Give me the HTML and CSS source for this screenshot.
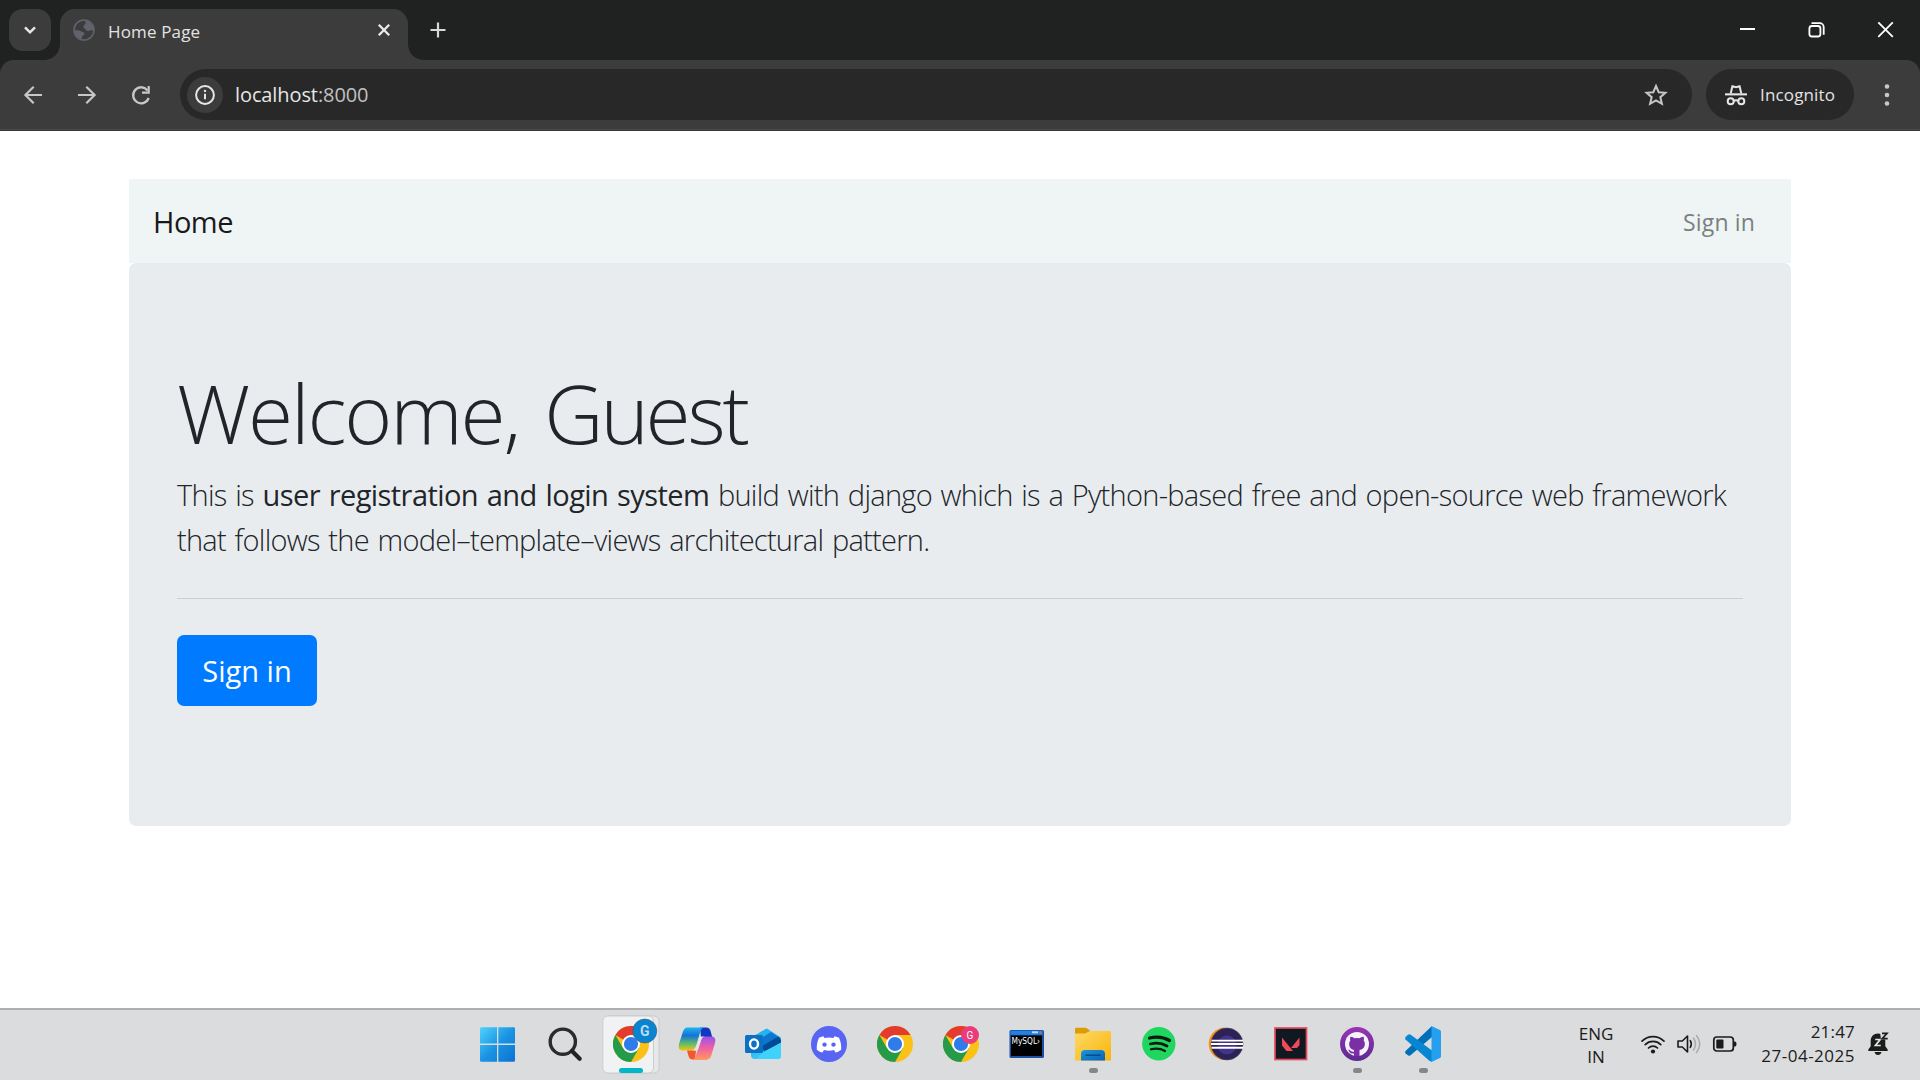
FILE: index.html
```html
<!DOCTYPE html>
<html lang="en">
<head>
<meta charset="utf-8">
<title>Home Page</title>
<link rel="stylesheet" href="styles.css">
</head>
<body>
<svg class="defs" aria-hidden="true">
  <defs>
    <linearGradient id="win" x1="0" y1="0" x2="1" y2="1"><stop offset="0" stop-color="#4fd3fb"/><stop offset=".5" stop-color="#1b94e4"/><stop offset="1" stop-color="#0a72d0"/></linearGradient>
    <linearGradient id="copA" x1="0" y1="0" x2="0" y2="1"><stop offset="0" stop-color="#1fb4ee"/><stop offset=".35" stop-color="#1473d8"/><stop offset=".7" stop-color="#5fbb6a"/><stop offset="1" stop-color="#f3c60e"/></linearGradient>
    <linearGradient id="copB" x1="0" y1="0" x2="0" y2="1"><stop offset="0" stop-color="#9a52ec"/><stop offset=".5" stop-color="#f0609f"/><stop offset="1" stop-color="#ff9a5c"/></linearGradient>
    <linearGradient id="outA" x1="0" y1="0" x2="1" y2="1"><stop offset="0" stop-color="#1ba7e6"/><stop offset="1" stop-color="#4adcff"/></linearGradient>
    <linearGradient id="fold" x1="0" y1="0" x2="1" y2="1"><stop offset="0" stop-color="#ffd965"/><stop offset="1" stop-color="#f7b50c"/></linearGradient>
    <linearGradient id="foldB" x1="0" y1="0" x2="1" y2="1"><stop offset="0" stop-color="#1b95dc"/><stop offset="1" stop-color="#0a62b2"/></linearGradient>
    <linearGradient id="gh" x1="0" y1="0" x2="0" y2="1"><stop offset="0" stop-color="#9a34b5"/><stop offset="1" stop-color="#5b2a91"/></linearGradient>
    <symbol id="chrome" viewBox="0 0 36 36">
      <circle cx="18" cy="18" r="18" fill="#fbc116"/>
      <path d="M18 18 2.4 9A18 18 0 0 1 33.6 9H18z" fill="#e33b2e"/>
      <path d="M2.4 9A18 18 0 0 0 18 36L25.8 22.5 18 18 10.2 22.5z" fill="#259a48"/>
      <circle cx="18" cy="18" r="9" fill="#fff"/><circle cx="18" cy="18" r="7.1" fill="#2f7bea"/>
    </symbol>
  </defs>
</svg>

<header class="tabstrip">
  <button class="tabsearch" aria-label="Search tabs"><svg width="42" height="42"><path d="M16 18.3l5 5 5-5" fill="none" stroke="#e8e8e8" stroke-width="2.4"/></svg></button>
  <div class="tab">
    <svg class="favicon" width="22" height="22" viewBox="0 0 22 22"><circle cx="11" cy="11" r="10" fill="#3c3c3c" stroke="#5f636b" stroke-width="1.6"/><path d="M12.500 1.500c-.5 1.200-.3 2.500.5 3.500-2 .6-2.600 1.600-2.500 3 .2 1.600 1.600 1.500 2.400 2.800.8 1.400 2.800 1.500 4.100.8 1.500-.8 2.700-.4 3.500.8A10 10 0 0 0 12.500 1.500zM1.500 11.500c2.500-.4 5-.2 7 1 1.200.7 3 .6 2.900 2.200-.1 1.500-1.900 1.500-2.300 3-.2 1-.4 2-1.400 2.300A9.500 9.500 0 0 1 1.500 11.500z" fill="#5f636b"/></svg>
    <span class="tab-title">Home Page</span>
    <svg class="tab-close" width="14" height="14"><path d="M1.800 1.800l10.400 10.400M12.200 1.800L1.800 12.200" stroke="#ececec" stroke-width="2.300"/></svg>
  </div>
  <svg class="newtab" width="16" height="16"><path d="M8 .5v15M.5 8h15" stroke="#d8d8d8" stroke-width="2.200"/></svg>
  <div class="winctl">
    <svg width="69" height="60"><path d="M27 29h15" stroke="#fff" stroke-width="2"/></svg>
    <svg width="69" height="60"><g fill="none" stroke="#fff" stroke-width="1.800"><rect x="27.400" y="26" width="11" height="10.500" rx="2.500"/><path d="M29.500 23.200h8.200a4 4 0 0 1 4 4v7.600"/></g></svg>
    <svg width="69" height="60"><path d="M27.300 22.300l14.500 14.500M41.800 22.300L27.300 36.800" stroke="#fff" stroke-width="1.800"/></svg>
  </div>
</header>

<div class="toolbar-bg"><nav class="toolbar">
  <svg class="tool" width="54" height="51"><path d="M33 26H16.500M24.700 17.700L16.400 26l8.300 8.300" fill="none" stroke="#c7c7c7" stroke-width="2.200"/></svg>
  <svg class="tool" width="54" height="51"><path d="M15 26h16.500M23.300 17.700L31.600 26l-8.300 8.300" fill="none" stroke="#c7c7c7" stroke-width="2.200"/></svg>
  <svg class="tool" width="54" height="51"><path d="M30.600 21.500A8 8 0 1 0 31.700 29" fill="none" stroke="#c7c7c7" stroke-width="2.300"/><path d="M32.800 17v7.800H25v-2.200h5.600V17z" fill="#c7c7c7"/></svg>
  <div class="omnibox">
    <span class="info"><svg width="36" height="36"><circle cx="18" cy="18" r="8.900" fill="none" stroke="#e6e6e6" stroke-width="2"/><path d="M18 16.800v5.400" stroke="#e6e6e6" stroke-width="2"/><circle cx="18" cy="13.900" r="1.200" fill="#e6e6e6"/></svg></span>
    <span class="url">localhost<span class="port">:8000</span></span>
    <svg class="star" width="24" height="24" viewBox="0 0 24 24"><path d="M12 3l2.700 6.200 6.700.6-5.100 4.400 1.600 6.600-5.900-3.500-5.900 3.500 1.600-6.600L2.600 9.800l6.700-.6z" fill="none" stroke="#c7c7c7" stroke-width="2"/></svg>
  </div>
  <div class="incog">
    <svg width="22" height="22" viewBox="0 0 22 22"><path d="M0 9.300h22v2.100H0z" fill="#e6e6e6"/><path d="M5.700 9.500L7.400 2.200 11 3.300l3.600-1.100 1.700 7.300" fill="none" stroke="#e6e6e6" stroke-width="2"/><g fill="none" stroke="#e6e6e6" stroke-width="2"><circle cx="5.700" cy="17.300" r="3"/><circle cx="16.300" cy="17.300" r="3"/><path d="M8.700 16.800q2.300-1.300 4.600 0"/></g></svg>
    <span class="incog-text">Incognito</span>
  </div>
  <svg class="menu" width="6" height="24"><g fill="#c7c7c7"><circle cx="3" cy="3.500" r="2.300"/><circle cx="3" cy="12" r="2.300"/><circle cx="3" cy="20.500" r="2.300"/></g></svg>
</nav></div>

<main class="page">
  <div class="navbar"><a class="brand">Home</a><a class="navlink">Sign in</a></div>
  <section class="jumbotron">
    <h1 class="title">Welcome, <span class="user">Guest</span></h1>
    <p class="lead"><span>This is <strong>user registration and login system</strong> build with django which is a Python-based free and open-source web framework</span><br><span class="second">that follows the model–template–views architectural pattern.</span></p>
    <hr class="rule">
    <a class="btn">Sign in</a>
  </section>
</main>

<footer class="taskbar">
  <div class="apps">
    <svg width="66" height="70"><g fill="url(#win)"><path d="M14 18.600q0-1.400 1.400-1.400H31v16.300H14zM32.300 17.200h15.300q1.400 0 1.400 1.400v14.900H32.300zM14 35h17v16.800H15.400Q14 51.800 14 50.400zM32.300 35H49v15.400q0 1.400-1.400 1.400H32.300z"/></g></svg>
    <svg width="66" height="70"><circle cx="30.800" cy="31.700" r="12.600" fill="none" stroke="#2b2b2b" stroke-width="3.400"/><path d="M40 41l7.700 7.800" stroke="#222" stroke-width="4.200" stroke-linecap="round"/></svg>
    <svg width="66" height="70"><rect x="7" y="6" width="54" height="57" rx="5" fill="#e7e8e9" stroke="#c9cacb"/><rect x="4.800" y="6" width="50.700" height="57" rx="5" fill="#f1f2f3" stroke="#cbcccd"/><use href="#chrome" x="15" y="16" width="36" height="36"/><circle cx="46.800" cy="21" r="12" fill="#0a84d0" stroke="#3a6076" stroke-width=".6"/><text x="46.800" y="26" class="badge blue">G</text><rect x="21" y="58" width="24" height="5" rx="2.500" fill="#00b7c9"/></svg>
    <svg width="66" height="70"><path d="M36 17.500h6c3 0 4 1.500 4.700 4l1.500 5.500H37z" fill="#1238c2"/><path d="M24 17.500h17c-3 0-4 1.500-5 5l-3 10.500c-1.500 5-3 7.500-7 7.500h-7c-4 0-4.800-2.500-4-6.500l3.500-11c1.300-4 2.500-5.500 5.500-5.500z" fill="url(#copA)"/><path d="M23 40.500h9l-1 9h-2c-3 0-4-1.500-4.800-4.500z" fill="#f2572d"/><path d="M41 26.500h6c4 0 5 2.500 4 6.500l-3 10c-1.200 5-3 7-7 7H27c3-.5 4-2 5-5l4.700-13.500c.8-3.500 1.600-5 4.300-5z" fill="url(#copB)"/><path d="M38 26.500h3c-2.700.3-3.500 2-4.300 5L34 39.500c-1 1-2.500 1-4.500 1 2-1.500 2.800-4 3.500-6.500l1.500-5c.6-1.800 1.500-2.500 3.500-2.500z" fill="#e6e4e8"/></svg>
    <svg width="66" height="70"><path d="M21 28l16-9.500 14 9v18q0 3.500-3.500 3.500H25q-4 0-4-4z" fill="url(#outA)"/><path d="M22 27l14-8.200 5 3.200-16 10z" fill="#25b3ee"/><path d="M25 32l16-10 7 4.500-16 10z" fill="#0d77d0"/><path d="M32 36l16-9.500c2.500 1.500 3 2.500 3 6L34 42z" fill="#004a98"/><path d="M33 42l18-9v13q0 3-3.500 3H27z" fill="#3fd2fa"/><rect x="15" y="25" width="18" height="18" rx="1.500" fill="#0c70c4"/><ellipse cx="24" cy="34" rx="4" ry="4.600" fill="none" stroke="#fff" stroke-width="2.400"/></svg>
    <svg width="66" height="70"><circle cx="33" cy="34" r="18" fill="#5765f2"/><path d="M27.500 26.300c-2.500.5-4.500 1.500-4.500 1.500-1.700 3.500-2.500 8-2.200 12 2 1.700 4.200 2.500 5.700 2.800l1.400-2.500q5 1.500 10.200 0l1.400 2.500c1.500-.3 3.700-1.100 5.700-2.800.3-4-.5-8.500-2.200-12 0 0-2-1-4.500-1.500l-1 1.600q-4.500-.7-9 0z" fill="#fff"/><circle cx="28.500" cy="34.600" r="2.200" fill="#5765f2"/><circle cx="37.500" cy="34.600" r="2.200" fill="#5765f2"/></svg>
    <svg width="66" height="70"><use href="#chrome" x="15" y="16" width="36" height="36"/></svg>
    <svg width="66" height="70"><use href="#chrome" x="15" y="16" width="36" height="36"/><circle cx="42" cy="25" r="9" fill="#ec3b7b"/><text x="42" y="28.500" class="badge pink">G</text></svg>
    <svg width="66" height="70"><rect x="15.500" y="20" width="34.500" height="28" rx="1.500" fill="#1c4f9f"/><rect x="16.500" y="20.800" width="32" height="4" fill="#1f83e4"/><path d="M38 22.300h6" stroke="#b9d8ff" stroke-width="2"/><path d="M45.500 22.300h2" stroke="#e06040" stroke-width="2"/><rect x="17" y="25.500" width="31" height="20.500" fill="#000"/><text x="17.500" y="34" class="mysql" textLength="28.500" lengthAdjust="spacingAndGlyphs">MySQL›</text></svg>
    <svg width="66" height="70"><path d="M15 26v-7q0-1.200 1.200-1.200H26l5 3.500V26z" fill="#dd9c06"/><path d="M15 23.500h10l5-2.500h20q1 0 1 1v28.500H15z" fill="url(#fold)"/><path d="M21 50.500v-6.500q0-4 4-4h16q4 0 4 4v6.500z" fill="url(#foldB)"/><path d="M26 45.200h14" stroke="#084d8a" stroke-width="1.600" stroke-linecap="round"/><rect x="29" y="58" width="9" height="5" rx="2.500" fill="#858687"/></svg>
    <svg width="66" height="70"><circle cx="32.800" cy="33.700" r="16.700" fill="#1fd760"/><g fill="none" stroke="#0c1a10" stroke-linecap="round"><path d="M23.500 28q11-2.800 20 2.500" stroke-width="3.200"/><path d="M24.300 34q9.500-2.300 16.700 2" stroke-width="2.700"/><path d="M25 39.300q8-1.800 14 1.700" stroke-width="2.200"/></g></svg>
    <svg width="66" height="70"><path d="M33 17.500a16.300 16.300 0 0 0 0 32.600z" fill="#f7941e"/><circle cx="35" cy="34" r="16" fill="#2c2255" stroke="#46415e" stroke-width=".6"/><circle cx="35" cy="35" r="9.500" fill="#41358a"/><path d="M19.500 30.600h31.500M19 34h32M19.500 37.800h31.500" stroke="#fff" stroke-width="1.900"/></svg>
    <svg width="66" height="70"><rect x="17" y="18" width="31.500" height="31.500" fill="#101822" stroke="#e5485a" stroke-width="1.700"/><path d="M24 27.500l11 13.500h-6.500L24 35.500zM41.500 27.500v7.500l-2.500 3h-6z" fill="#f2485a"/></svg>
    <svg width="66" height="70"><circle cx="33" cy="34" r="17" fill="url(#gh)"/><circle cx="33" cy="34" r="12" fill="#f5f3fa"/><path d="M26.500 26.800c1.500-.2 3 .7 4 1.400q2.500-.5 5 0c1-.7 2.500-1.600 4-1.400.6 1.400.6 2.600.2 3.700 1.300 1.600 1.300 3.400 1 5-.6 2.700-2.400 4-5.200 4.500v6H30v-2.500c-2.600.5-4.100-.6-5-2.600l-.8-1.300 1.800.5c1 1.500 2.200 1.900 4 1.400V40c-2.500-.5-4.200-1.900-4.700-4.500-.3-1.800-.2-3.500 1-5-.4-1.100-.3-2.300.2-3.700z" fill="#7a2fa5"/><rect x="29" y="58" width="9" height="5" rx="2.500" fill="#858687"/></svg>
    <svg width="66" height="70"><path d="M15.500 41q-1 1.200 0 2.300l2.300 2q1.200.9 2.700-.1L42 27V16z" fill="#0070b8"/><path d="M15.500 27l2.500-2.200q1.200-1 2.700 0L42 40.500V51.500z" fill="#0787d2"/><path d="M15.500 27q-1 1.200 0 2.400L39 50.500l3 1.500V43z" fill="#0787d2"/><path d="M41.500 16l8.500 4q1 .7 1 2v24q0 1.300-1 2l-8.500 4z" fill="#25a0f0"/><rect x="29" y="58" width="9" height="5" rx="2.500" fill="#858687"/></svg>
  </div>
  <div class="lang"><span>ENG</span><span>IN</span></div>
  <div class="status">
    <svg width="26" height="22" viewBox="0 0 26 22"><g fill="none" stroke="#1b1b1b" stroke-width="1.700" stroke-linecap="round"><path d="M2 8.200a15.500 15.500 0 0 1 22 0"/><path d="M5.200 11.700a11 11 0 0 1 15.600 0"/><path d="M8.500 15a6.300 6.300 0 0 1 9 0"/></g><circle cx="13" cy="18.500" r="2.100" fill="#1b1b1b"/></svg>
    <svg width="26" height="22" viewBox="0 0 26 22"><path d="M2 8h4.300L11.500 3v16l-5.200-5H2z" fill="none" stroke="#1b1b1b" stroke-width="1.600" stroke-linejoin="round"/><path d="M14.300 7.700q2 3.300 0 6.600" fill="none" stroke="#1b1b1b" stroke-width="1.600" stroke-linecap="round"/><g fill="none" stroke="#a9aaab" stroke-width="1.500" stroke-linecap="round"><path d="M17.500 5q4 6 0 12"/><path d="M20.500 2.500q6.500 8.500 0 17"/></g></svg>
    <svg width="26" height="22" viewBox="0 0 26 22"><rect x="1.800" y="4" width="19.500" height="14" rx="3" fill="none" stroke="#1b1b1b" stroke-width="1.700"/><rect x="4.300" y="6.500" width="7.200" height="9" rx="1" fill="#1b1b1b"/><path d="M22 8.500h1q1.500 0 1.500 2.500T23 13.500h-1z" fill="#1b1b1b"/></svg>
  </div>
  <div class="clock"><span class="time">21:47</span><span class="date">27-04-2025</span></div>
  <svg class="bell" width="24" height="26" viewBox="0 0 24 26"><path d="M11 2.500c-4.300 0-7.300 3.200-7.300 7.300v5.400l-2.400 3.300q-.6 1.500.8 1.500h17.800q1.400 0 .8-1.500l-2.400-3.300V9.800c0-4-3-7.300-7.300-7.300z" fill="#1b1b1b"/><path d="M7.500 21h7q-.8 3-3.500 3t-3.500-3z" fill="#1b1b1b"/><path d="M8.200 8.500h5L8.400 14.500h5.400" fill="none" stroke="#e4e5e6" stroke-width="1.700"/><path d="M13 1h8.500v7.500H14z" fill="#dcddde"/><path d="M15 2.300h5l-4.800 5.400h5.500" fill="none" stroke="#1b1b1b" stroke-width="1.700"/></svg>
</footer>
</body>
</html>
```
FILE: styles.css
```css
* { box-sizing: border-box; }
body {
  margin: 0; width: 1920px; height: 1080px; overflow: hidden;
  display: flex; flex-direction: column; background: #fff;
  font-family: "Open Sans", "Noto Sans", sans-serif; color: #212529;
}
svg { display: block; flex: none; }
.defs { width: 0; height: 0; position: absolute; }
span, a { white-space: nowrap; }

.tabstrip { height: 60px; flex: none; display: flex; background: #202221; padding: 9px 0 0 9px; }
.tabsearch { width: 42px; height: 42px; padding: 0; border: 0; border-radius: 14px; background: #3c3c3c; }
.tab {
  position: relative; width: 348px; height: 51px; margin-left: 9px; padding: 0 17px 9px 13px;
  border-radius: 15px 15px 0 0; background: #3c3c3c; display: flex; align-items: center;
}
.tab::before, .tab::after { content: ""; position: absolute; bottom: 0; width: 15px; height: 15px; }
.tab::before { left: -15px; background: radial-gradient(circle at 0 0, transparent 14.5px, #3c3c3c 15px); }
.tab::after { right: -15px; background: radial-gradient(circle at 100% 0, transparent 14.5px, #3c3c3c 15px); }
.tab-title { margin: 4px auto 0 13px; font-size: 17px; line-height: 24px; letter-spacing: .15px; color: #e3e3e3; }
.newtab { margin: 13px 0 0 22px; }
.winctl { display: flex; margin: -9px 0 0 auto; }

.toolbar-bg { background: #202221; flex: none; }
.toolbar {
  height: 71px; display: flex; align-items: flex-start; padding: 9px 0 0 9px;
  background: linear-gradient(#3c3c3c 69px, #4b4b4b 69px, #4b4b4b 70px, #363636 70px);
  border-radius: 14px 14px 0 0;
}
.omnibox { width: 1512px; height: 51px; margin-left: 9px; border-radius: 26px; background: #282828; display: flex; align-items: center; padding: 0 24px 0 7px; }
.info { width: 36px; height: 36px; border-radius: 50%; background: #3c3c3c; }
.url { margin: 0 auto 0 12px; font-size: 20px; line-height: 28px; letter-spacing: -.1px; color: #e6e6e6; }
.port { color: #c0c0c0; }
.incog { width: 148px; height: 51px; margin-left: 14px; border-radius: 26px; background: #282828; display: flex; align-items: center; padding-left: 19px; }
.incog-text { margin-left: 13px; font-size: 17px; letter-spacing: .15px; color: #e3e3e3; }
.menu { margin: 14px 0 0 30px; }

.page { flex: 1; padding: 48px 129px 0; }
.navbar { height: 84px; background: #eff5f5; display: flex; align-items: center; justify-content: space-between; padding: 2px 36px 0 24px; }
.brand { font-size: 29px; letter-spacing: -.5px; color: #181a1a; margin-top: -2px; }
.navlink { font-size: 23px; letter-spacing: .15px; color: #7b7f7f; }
.jumbotron { height: 563px; padding: 99px 48px 0; border-radius: 7px; background: #e9ecef; }
.title { margin: 0 0 9px; font-size: 82px; line-height: 101px; font-weight: 300; letter-spacing: -2.1px; word-spacing: 6px; }
.user { letter-spacing: -3.2px; }
.lead { margin: 0; font-size: 29px; line-height: 45px; font-weight: 300; letter-spacing: -.71px; word-spacing: 1.8px; }
.lead strong { font-weight: 400; letter-spacing: -.57px; }
.second { letter-spacing: -.73px; }
.rule { margin: 36px 0; border: 0; height: 1px; background: #cccfd2; }
.btn { display: inline-flex; width: 140px; height: 71px; align-items: center; justify-content: center; border-radius: 7px; background: #007bff; color: #fff; font-size: 29px; }

.taskbar { height: 72px; flex: none; border-top: 2px solid #aeafaf; background: #dbdcde; display: flex; padding-left: 466px; }
.apps { display: flex; width: 990px; }
.badge { font-family: Roboto, sans-serif; text-anchor: middle; }
.blue { font-size: 14px; font-weight: 700; fill: #b9dcf2; }
.pink { font-size: 10px; fill: #fff; }
.mysql { font-family: "DejaVu Sans", sans-serif; font-size: 8px; fill: #fff; }
.lang, .clock { display: flex; flex-direction: column; font-size: 17px; color: #1b1b1b; }
.lang { width: 50px; margin-left: 115px; padding-top: 12px; line-height: 23px; align-items: center; }
.status { display: flex; gap: 10px; margin: 23px 0 0 19px; }
.clock { width: 106px; margin-left: 11px; padding-top: 10px; line-height: 24px; align-items: flex-end; }
.time { letter-spacing: .2px; }
.date { letter-spacing: .5px; }
.bell { margin: 21px 0 0 12px; }
```
